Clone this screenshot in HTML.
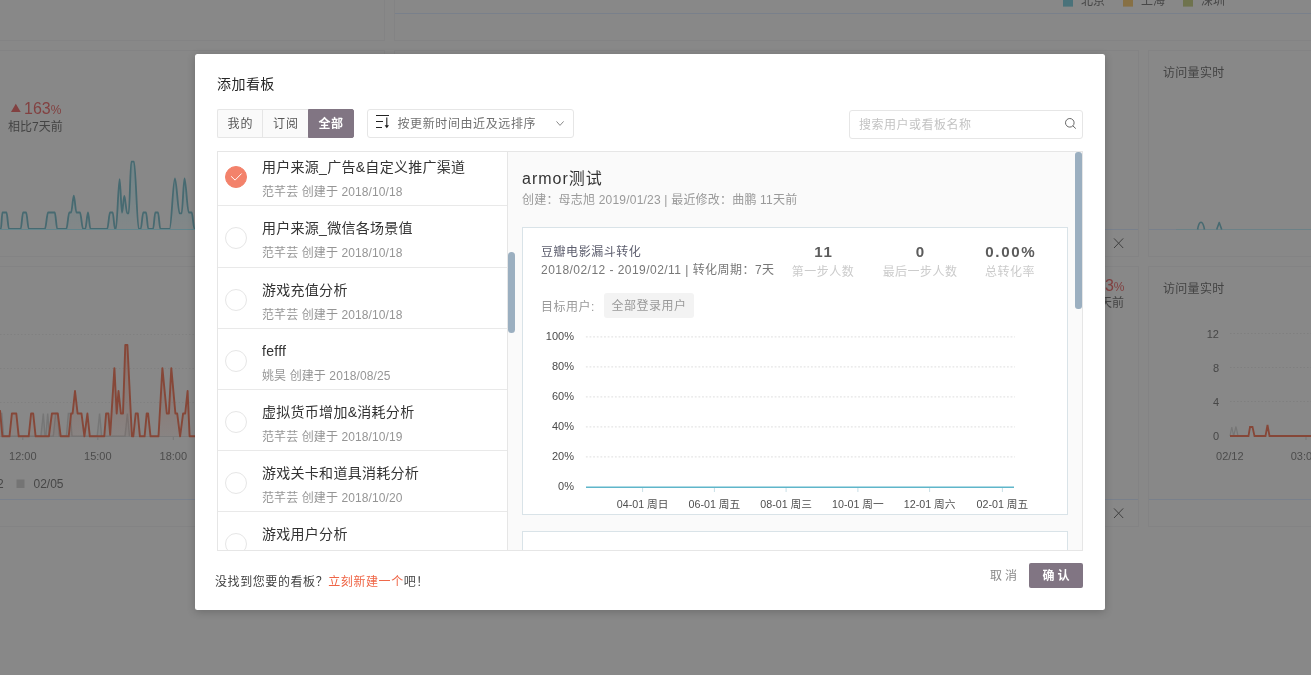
<!DOCTYPE html>
<html lang="zh-CN">
<head>
<meta charset="utf-8">
<title>添加看板</title>
<style>
*{box-sizing:border-box;margin:0;padding:0}
html,body{width:1311px;height:675px;overflow:hidden}
body{position:relative;background:#888888;font-family:"Liberation Sans","Noto Sans CJK SC",sans-serif;font-size:12px;color:#333}
.abs{position:absolute}
.card{position:absolute;background:#888888;border:1px solid #838384}
.hl{position:absolute;height:1px;background:#79808b}
.bgt{position:absolute;color:#4d4d4d;font-size:12px;white-space:nowrap;line-height:14px}
#modal{will-change:transform;position:absolute;left:195px;top:54px;width:910px;height:556px;background:#fff;border-radius:2.5px;box-shadow:0 2px 8px rgba(0,0,0,.2)}
#title{position:absolute;left:22px;top:22px;font-size:14px;line-height:16px;color:#262626;white-space:nowrap;letter-spacing:.45px}
.tabs{position:absolute;left:22px;top:55px;height:29px;display:flex}
.tab{width:46px;height:29px;line-height:28px;text-align:center;font-size:12px;color:#555;border:1px solid #e6e6e6;border-right:none;background:#fafafa;white-space:nowrap;letter-spacing:.8px;padding-left:.8px}
.tab:first-child{border-radius:2px 0 0 2px;width:45px}
.tab.on{background:#817583;color:#fff;font-weight:bold;border:1px solid #817583;border-radius:0 2px 2px 0;padding-left:0;letter-spacing:.6px}
.sel{position:absolute;left:172px;top:55px;width:207px;height:29px;border:1px solid #e6e6e6;border-radius:3px;background:#fff}
.sel span{position:absolute;left:29.5px;top:0;line-height:28px;font-size:12px;color:#707070;white-space:nowrap;letter-spacing:.6px}
.search{position:absolute;left:654px;top:56px;width:234px;height:29px;border:1px solid #e6e6e6;border-radius:3px;background:#fff}
.search span{position:absolute;left:9px;top:0;line-height:28px;font-size:12px;color:#c3c3c3;white-space:nowrap;letter-spacing:.5px}
#list{position:absolute;left:22px;top:97px;width:291px;height:400px;border:1px solid #e6e6e6;border-right:none;overflow:hidden;background:#fff}
.it{position:relative;height:61px;border-bottom:1px solid #e9e9e9}
.it .c{position:absolute;left:7px;top:20.5px;width:22px;height:22px;border-radius:50%;border:1px solid #e6e6e6;background:#fff}
.it .c.on{background:#f3826b;border-color:#f3826b}
.it .c svg{position:absolute;left:-1px;top:-1px}
.it .t{position:absolute;left:44px;top:14px;font-size:14px;line-height:16px;color:#333;white-space:nowrap;letter-spacing:.28px}
.it .s{position:absolute;left:44px;top:40px;font-size:12px;line-height:14px;color:#959595;white-space:nowrap;letter-spacing:.1px}
#panel{position:absolute;left:312px;top:97px;width:576px;height:400px;border:1px solid #e6e6e6;background:#fafafa;overflow:hidden}
#foot{position:absolute;left:20px;top:520px;font-size:12px;line-height:16px;color:#444;white-space:nowrap;letter-spacing:.58px}
#foot b{font-weight:normal;color:#ef6546}
#cancel{position:absolute;left:795px;top:514px;font-size:12px;line-height:16px;color:#888;white-space:nowrap;letter-spacing:3px}
#ok{position:absolute;left:834px;top:509px;width:54px;height:25px;background:#817583;border-radius:2px;color:#fff;font-weight:bold;font-size:12px;line-height:26px;text-align:center;letter-spacing:3px;padding-left:3px}

#ph{position:absolute;left:14px;top:17px;font-size:16px;line-height:20px;color:#333;white-space:nowrap;letter-spacing:1px}
#ps{position:absolute;left:14px;top:41px;font-size:12px;line-height:14px;color:#999;white-space:nowrap;letter-spacing:.2px}
.pc{position:absolute;left:14px;width:546px;border:1px solid #d9e3e8;background:#fff}
.pc .ct{position:absolute;left:18px;top:17px;font-size:12px;line-height:14px;color:#5d5e6e;white-space:nowrap;letter-spacing:.55px}
.pc .cd{position:absolute;left:18px;top:35px;font-size:12px;line-height:14px;color:#777;white-space:nowrap;letter-spacing:.46px}
.st{position:absolute;top:16px;width:100px;text-align:center;white-space:nowrap}
.st b{display:block;font-size:14px;line-height:16px;color:#5c5c5c;letter-spacing:1.5px;padding-left:1.5px;transform:scaleX(1.08)}
.st i{display:block;font-style:normal;font-size:12px;line-height:14px;color:#cbcbcb;margin-top:4.5px;letter-spacing:.45px}
.tu{position:absolute;left:18px;top:72px;font-size:12px;line-height:14px;color:#999;white-space:nowrap;letter-spacing:.5px}
.tg{position:absolute;left:81px;top:65px;width:90px;height:25px;border-radius:3px;background:#f3f3f3;color:#999;font-size:12px;line-height:27px;text-align:center;white-space:nowrap;letter-spacing:.5px}
.sb{position:absolute;width:7px;border-radius:3.5px;background:#9bafc0}
svg text{font-family:"Liberation Sans","Noto Sans CJK SC",sans-serif}
#bg{position:absolute;left:0;top:0;width:1311px;height:675px;will-change:transform}
</style>
</head>
<body>
<!-- background dashboard (dimmed) -->
<div id="bg">
<div class="card" style="left:-2px;top:-5px;width:387px;height:46px"></div>
<div class="card" style="left:394px;top:-5px;width:921px;height:46px"></div>
<div class="hl" style="left:395px;top:13px;width:920px"></div>
<div class="card" style="left:-2px;top:50px;width:387px;height:207px"></div>
<div class="card" style="left:394px;top:50px;width:745px;height:207px"></div>
<div class="card" style="left:1148px;top:50px;width:170px;height:207px"></div>
<div class="card" style="left:-2px;top:266px;width:387px;height:261px"></div>
<div class="card" style="left:394px;top:266px;width:745px;height:261px"></div>
<div class="card" style="left:1148px;top:266px;width:170px;height:261px"></div>
<div class="hl" style="left:0;top:229px;width:384px"></div>
<div class="hl" style="left:395px;top:229px;width:743px"></div>
<div class="hl" style="left:1149px;top:229px;width:170px"></div>
<div class="hl" style="left:0;top:499px;width:384px"></div>
<div class="hl" style="left:395px;top:499px;width:743px"></div>
<div class="hl" style="left:1149px;top:499px;width:170px"></div>
<svg class="abs" style="left:0;top:0" width="1311" height="675" viewBox="0 0 1311 675">
<defs><clipPath id="tc"><rect x="0" y="100" width="210" height="129.3"/></clipPath><linearGradient id="tg" x1="0" y1="160" x2="0" y2="229" gradientUnits="userSpaceOnUse"><stop offset="0" stop-color="#4f7f88" stop-opacity=".4"/><stop offset="1" stop-color="#4f7f88" stop-opacity=".1"/></linearGradient><linearGradient id="og" x1="0" y1="345" x2="0" y2="436" gradientUnits="userSpaceOnUse"><stop offset="0" stop-color="#8f5040" stop-opacity=".4"/><stop offset="1" stop-color="#8f5040" stop-opacity=".08"/></linearGradient></defs>
<rect x="1063" y="-3.4" width="10" height="10" fill="#4a727a"/><rect x="1123" y="-3.4" width="10" height="10" fill="#877044"/><rect x="1183" y="-3.4" width="10" height="10" fill="#6f734e"/>
<text x="1081" y="5.2" font-size="12" fill="#484848">北京</text><text x="1141" y="5.2" font-size="12" fill="#484848">上海</text><text x="1201" y="5.2" font-size="12" fill="#484848">深圳</text>
<path d="M0.0 228.8C0.3 228.8 0.6 228.8 0.9 228.8C1.4 228.8 1.9 212.5 2.4 212.5C3.8 212.5 5.1 212.5 6.5 212.5C7.3 212.5 8.1 228.8 8.9 228.8C12.8 228.8 16.8 228.8 20.7 228.8C21.5 228.8 22.3 212.5 23.1 212.5C24.1 212.5 25.1 212.5 26.1 212.5C27.0 212.5 27.9 228.8 28.7 228.8C34.2 228.8 39.6 228.8 45.0 228.8C46.0 228.8 47.0 212.5 48.0 212.5C50.3 212.5 52.5 212.5 54.8 212.5C55.6 212.5 56.4 228.8 57.2 228.8C60.2 228.8 63.3 228.8 66.4 228.8C67.4 228.8 68.3 212.5 69.3 212.5C69.9 212.5 70.5 212.5 71.1 212.5C72.0 212.5 72.9 195.7 73.8 195.7C74.7 195.7 75.6 212.5 76.4 212.5C77.6 212.5 78.8 212.5 80.0 212.5C81.0 212.5 82.0 228.8 83.0 228.8C83.8 228.8 84.5 228.8 85.3 228.8C86.2 228.8 87.1 212.5 88.0 212.5C88.8 212.5 89.6 228.8 90.4 228.8C95.4 228.8 100.5 228.8 105.5 228.8C106.1 228.8 106.7 228.8 107.3 228.8C108.2 228.8 109.1 212.5 110.0 212.5C110.9 212.5 111.8 212.5 112.7 212.5C113.4 212.5 114.2 228.8 114.9 228.8C115.2 228.8 115.6 228.8 115.9 228.8C117.1 228.8 118.4 179.1 119.6 179.1C120.4 179.1 121.2 212.7 122.0 212.7C122.8 212.7 123.5 196.0 124.3 196.0C125.3 196.0 126.2 213.3 127.2 213.3C127.7 213.3 128.2 213.3 128.7 213.3C129.6 213.3 130.4 161.7 131.3 161.7C132.2 161.7 133.1 161.7 134.0 161.7C135.6 161.7 137.1 228.8 138.7 228.8C139.4 228.8 140.0 228.8 140.7 228.8C141.6 228.8 142.4 212.5 143.3 212.5C144.2 212.5 145.1 212.5 146.0 212.5C146.8 212.5 147.5 228.8 148.3 228.8C149.9 228.8 151.5 228.8 153.1 228.8C153.8 228.8 154.6 212.5 155.3 212.5C156.2 212.5 157.1 212.5 158.0 212.5C158.8 212.5 159.5 228.8 160.3 228.8C163.4 228.8 166.5 228.8 169.6 228.8C171.4 228.8 173.1 178.4 174.9 178.4C176.5 178.4 178.0 213.3 179.6 213.3C180.3 213.3 180.9 213.3 181.6 213.3C182.6 213.3 183.5 178.4 184.5 178.4C185.9 178.4 187.3 212.5 188.7 212.5C189.7 212.5 190.7 212.5 191.7 212.5C192.6 212.5 193.5 228.8 194.4 228.8C199.6 228.8 204.8 228.8 210.0 228.8L210 229L0 229Z" fill="url(#tg)"/>
<path d="M0.0 228.8C0.3 228.8 0.6 228.8 0.9 228.8C1.4 228.8 1.9 212.5 2.4 212.5C3.8 212.5 5.1 212.5 6.5 212.5C7.3 212.5 8.1 228.8 8.9 228.8C12.8 228.8 16.8 228.8 20.7 228.8C21.5 228.8 22.3 212.5 23.1 212.5C24.1 212.5 25.1 212.5 26.1 212.5C27.0 212.5 27.9 228.8 28.7 228.8C34.2 228.8 39.6 228.8 45.0 228.8C46.0 228.8 47.0 212.5 48.0 212.5C50.3 212.5 52.5 212.5 54.8 212.5C55.6 212.5 56.4 228.8 57.2 228.8C60.2 228.8 63.3 228.8 66.4 228.8C67.4 228.8 68.3 212.5 69.3 212.5C69.9 212.5 70.5 212.5 71.1 212.5C72.0 212.5 72.9 195.7 73.8 195.7C74.7 195.7 75.6 212.5 76.4 212.5C77.6 212.5 78.8 212.5 80.0 212.5C81.0 212.5 82.0 228.8 83.0 228.8C83.8 228.8 84.5 228.8 85.3 228.8C86.2 228.8 87.1 212.5 88.0 212.5C88.8 212.5 89.6 228.8 90.4 228.8C95.4 228.8 100.5 228.8 105.5 228.8C106.1 228.8 106.7 228.8 107.3 228.8C108.2 228.8 109.1 212.5 110.0 212.5C110.9 212.5 111.8 212.5 112.7 212.5C113.4 212.5 114.2 228.8 114.9 228.8C115.2 228.8 115.6 228.8 115.9 228.8C117.1 228.8 118.4 179.1 119.6 179.1C120.4 179.1 121.2 212.7 122.0 212.7C122.8 212.7 123.5 196.0 124.3 196.0C125.3 196.0 126.2 213.3 127.2 213.3C127.7 213.3 128.2 213.3 128.7 213.3C129.6 213.3 130.4 161.7 131.3 161.7C132.2 161.7 133.1 161.7 134.0 161.7C135.6 161.7 137.1 228.8 138.7 228.8C139.4 228.8 140.0 228.8 140.7 228.8C141.6 228.8 142.4 212.5 143.3 212.5C144.2 212.5 145.1 212.5 146.0 212.5C146.8 212.5 147.5 228.8 148.3 228.8C149.9 228.8 151.5 228.8 153.1 228.8C153.8 228.8 154.6 212.5 155.3 212.5C156.2 212.5 157.1 212.5 158.0 212.5C158.8 212.5 159.5 228.8 160.3 228.8C163.4 228.8 166.5 228.8 169.6 228.8C171.4 228.8 173.1 178.4 174.9 178.4C176.5 178.4 178.0 213.3 179.6 213.3C180.3 213.3 180.9 213.3 181.6 213.3C182.6 213.3 183.5 178.4 184.5 178.4C185.9 178.4 187.3 212.5 188.7 212.5C189.7 212.5 190.7 212.5 191.7 212.5C192.6 212.5 193.5 228.8 194.4 228.8C199.6 228.8 204.8 228.8 210.0 228.8" fill="none" stroke="#476a71" stroke-width="1.8" stroke-linejoin="round" clip-path="url(#tc)"/><line x1="0" y1="229.5" x2="200" y2="229.5" stroke="#63848b" stroke-width="1"/>
<polygon points="11,112 20.7,112 15.8,103.8" fill="#824141"/>
<text x="24" y="114" font-size="16" fill="#824141">163<tspan font-size="12">%</tspan></text>
<text x="8" y="131" font-size="12" fill="#444">相比7天前</text>
<g stroke="#808080" stroke-width="1" stroke-dasharray="1.5 2"><line x1="0" y1="334.5" x2="200" y2="334.5"/><line x1="0" y1="368.5" x2="200" y2="368.5"/><line x1="0" y1="402.5" x2="200" y2="402.5"/></g>
<line x1="0" y1="436.5" x2="200" y2="436.5" stroke="#7c7c7c" stroke-width="1"/>
<polygon points="0.0,413.5 1.8,413.5 3.6,436.3 40.9,436.3 43.3,413.5 45.0,436.3 45.9,436.3 47.7,413.5 49.5,436.3 53.3,436.3 55.7,413.5 57.5,413.5 59.3,436.3 66.4,436.3 68.4,413.5 70.2,413.5 72.0,436.3 97.2,436.3 99.6,413.5 101.6,436.3 125.0,436.3 127.4,413.5 129.5,436.3 129.5,436.3 0.0,436.3" fill="#777" fill-opacity=".2"/>
<polyline points="0.0,413.5 1.8,413.5 3.6,436.3 40.9,436.3 43.3,413.5 45.0,436.3 45.9,436.3 47.7,413.5 49.5,436.3 53.3,436.3 55.7,413.5 57.5,413.5 59.3,436.3 66.4,436.3 68.4,413.5 70.2,413.5 72.0,436.3 97.2,436.3 99.6,413.5 101.6,436.3 125.0,436.3 127.4,413.5 129.5,436.3" fill="none" stroke="#767676" stroke-width="1.4"/>
<polygon points="0.0,410.2 2.4,436.3 9.5,436.3 11.9,413.5 16.3,413.5 18.7,436.3 28.7,436.3 31.1,413.5 33.2,413.5 35.6,436.3 48.9,436.3 51.9,413.5 57.8,413.5 60.7,436.3 68.7,436.3 71.1,413.5 72.6,413.5 75.0,391.0 77.6,413.5 81.5,413.5 84.4,436.3 87.4,413.5 89.8,436.3 104.3,436.3 106.1,413.5 108.4,413.5 110.2,434.8 114.4,368.1 116.7,413.5 118.5,391.0 120.9,413.5 123.0,413.5 125.3,345.0 127.4,345.0 131.9,436.3 133.3,436.3 135.7,413.5 137.8,413.5 139.9,436.3 144.6,436.3 146.7,413.5 148.1,413.5 150.5,436.3 158.5,436.3 162.4,368.1 166.8,413.5 168.9,413.5 171.3,368.1 175.4,413.5 177.2,413.5 180.1,436.3 183.1,413.5 185.2,413.5 187.6,391.0 189.6,436.3 207.4,436.3 207.4,436.3 0.0,436.3" fill="url(#og)"/>
<polyline points="0.0,410.2 2.4,436.3 9.5,436.3 11.9,413.5 16.3,413.5 18.7,436.3 28.7,436.3 31.1,413.5 33.2,413.5 35.6,436.3 48.9,436.3 51.9,413.5 57.8,413.5 60.7,436.3 68.7,436.3 71.1,413.5 72.6,413.5 75.0,391.0 77.6,413.5 81.5,413.5 84.4,436.3 87.4,413.5 89.8,436.3 104.3,436.3 106.1,413.5 108.4,413.5 110.2,434.8 114.4,368.1 116.7,413.5 118.5,391.0 120.9,413.5 123.0,413.5 125.3,345.0 127.4,345.0 131.9,436.3 133.3,436.3 135.7,413.5 137.8,413.5 139.9,436.3 144.6,436.3 146.7,413.5 148.1,413.5 150.5,436.3 158.5,436.3 162.4,368.1 166.8,413.5 168.9,413.5 171.3,368.1 175.4,413.5 177.2,413.5 180.1,436.3 183.1,413.5 185.2,413.5 187.6,391.0 189.6,436.3 207.4,436.3" fill="none" stroke="#864738" stroke-width="1.9" stroke-linejoin="round"/>
<g stroke="#777" stroke-width="1"><line x1="22.8" y1="437" x2="22.8" y2="440"/><line x1="97.8" y1="437" x2="97.8" y2="440"/><line x1="173.3" y1="437" x2="173.3" y2="440"/></g>
<g font-size="11" fill="#4c4c4c" text-anchor="middle"><text x="22.8" y="459.7">12:00</text><text x="97.8" y="459.7">15:00</text><text x="173.3" y="459.7">18:00</text></g>
<text x="-3" y="487.5" font-size="12" fill="#474747">2</text><rect x="16.5" y="479.5" width="8" height="8.5" fill="#747474"/><text x="33.5" y="487.5" font-size="12" fill="#474747">02/05</text>
<g stroke="#404040" stroke-width="1"><path d="M1114 238.4L1123.2 248M1123.2 238.4L1114 248"/><path d="M1114 508.4L1123.2 518M1123.2 508.4L1114 518"/></g>
<text x="1124.5" y="291" font-size="16" fill="#824141" text-anchor="end">163<tspan font-size="12">%</tspan></text>
<text x="1124" y="307" font-size="12" fill="#444" text-anchor="end">相比7天前</text>
<text x="1163" y="77" font-size="12" fill="#434343" letter-spacing=".3">访问量实时</text>
<text x="1163" y="293" font-size="12" fill="#434343" letter-spacing=".3">访问量实时</text>
<line x1="1176" y1="229.5" x2="1311" y2="229.5" stroke="#6c8187" stroke-width="1"/><path d="M1197.6 229.5C1198.4 224.5 1199.4 222.2 1201 222.2C1202.6 222.2 1203.6 224.5 1204.5 229.5M1216.7 229.5L1219.2 222.6L1221.7 229.5" fill="none" stroke="#476a71" stroke-width="1.6" stroke-linejoin="round"/>
<g stroke="#7f7f7f" stroke-width="1" stroke-dasharray="1.5 2"><line x1="1230" y1="333.5" x2="1311" y2="333.5"/><line x1="1230" y1="367.5" x2="1311" y2="367.5"/><line x1="1230" y1="401.5" x2="1311" y2="401.5"/></g>
<g font-size="11" fill="#474747" text-anchor="end"><text x="1219" y="338">12</text><text x="1219" y="372">8</text><text x="1219" y="406">4</text><text x="1219" y="440">0</text></g>
<polyline points="1230,436 1231.8,427 1233.6,436 1236,426.5 1238,436" fill="none" stroke="#767676" stroke-width="1.2"/>
<polyline points="1230,436 1248.5,436 1250,427 1252.5,427 1254.5,436 1265.5,436 1267.5,425 1269.5,436 1311,436" fill="none" stroke="#864738" stroke-width="1.8"/>
<line x1="1306" y1="437" x2="1306" y2="440" stroke="#777"/>
<g font-size="11" fill="#4c4c4c"><text x="1229.8" y="460.3" text-anchor="middle">02/12</text><text x="1290.7" y="460.3">03:00</text></g>
</svg>
</div>

<div id="modal">
<div id="title">添加看板</div>
<div class="tabs"><div class="tab">我的</div><div class="tab">订阅</div><div class="tab on">全部</div></div>
<div class="sel"><svg class="abs" style="left:0;top:0" width="205" height="27" viewBox="0 0 205 27"><g stroke="#222" stroke-width="1.1" fill="none"><path d="M8 5.5H21M8 11.5H15M8 17.5H14M18.8 7.5V17"/></g><path d="M16.6 15.2H21L18.8 18.2Z" fill="#222"/><path d="M188.5 11.4L192 15.4L195.6 11.4" stroke="#8a8a8a" stroke-width="1" fill="none"/></svg><span>按更新时间由近及远排序</span></div>
<div class="search"><span>搜索用户或看板名称</span><svg class="abs" style="left:0;top:0" width="232" height="27" viewBox="0 0 232 27"><g stroke="#666" stroke-width="1" fill="none"><circle cx="219.8" cy="11.8" r="4.3"/><path d="M222.9 14.9L225.8 17.6"/></g></svg></div>
<div id="list">
<div class="it" style="margin-top:-7px"><div class="c on"><svg width="22" height="22" viewBox="0 0 22 22"><path d="M6.1 10.3L10.1 14.1L16.6 7.5" stroke="#fff" stroke-width=".95" fill="none"/></svg></div><div class="t">用户来源_广告&amp;自定义推广渠道</div><div class="s">范芊芸 创建于 2018/10/18</div></div>
<div class="it" style="height:62px"><div class="c"></div><div class="t">用户来源_微信各场景值</div><div class="s">范芊芸 创建于 2018/10/18</div></div>
<div class="it"><div class="c"></div><div class="t">游戏充值分析</div><div class="s">范芊芸 创建于 2018/10/18</div></div>
<div class="it"><div class="c"></div><div class="t">fefff</div><div class="s">姚昊 创建于 2018/08/25</div></div>
<div class="it"><div class="c"></div><div class="t">虚拟货币增加&amp;消耗分析</div><div class="s">范芊芸 创建于 2018/10/19</div></div>
<div class="it"><div class="c"></div><div class="t">游戏关卡和道具消耗分析</div><div class="s">范芊芸 创建于 2018/10/20</div></div>
<div class="it"><div class="c"></div><div class="t">游戏用户分析</div><div class="s">范芊芸 创建于 2018/10/20</div></div>
</div>
<div id="panel">
<div id="ph">armor测试</div>
<div id="ps">创建：母志旭 2019/01/23 | 最近修改：曲鹏 11天前</div>
<div class="pc" style="top:75px;height:288px">
<div class="ct">豆瓣电影漏斗转化</div>
<div class="cd">2018/02/12 - 2019/02/11 | 转化周期：7天</div>
<div class="st" style="left:250px"><b>11</b><i>第一步人数</i></div>
<div class="st" style="left:347px"><b>0</b><i>最后一步人数</i></div>
<div class="st" style="left:437px"><b>0.00%</b><i>总转化率</i></div>
<div class="tu">目标用户:</div><div class="tg">全部登录用户</div>
<svg class="abs" style="left:0;top:0" width="544" height="286" viewBox="0 0 544 286"><line x1="62.9" y1="108.85" x2="492" y2="108.85" stroke="#e5e5e5" stroke-width="1.4" stroke-dasharray="1.8 1.83"/><text x="51.0" y="112.3" text-anchor="end" font-size="11" fill="#4a4a4a">100%</text><line x1="62.9" y1="138.85" x2="492" y2="138.85" stroke="#e5e5e5" stroke-width="1.4" stroke-dasharray="1.8 1.83"/><text x="51.0" y="142.3" text-anchor="end" font-size="11" fill="#4a4a4a">80%</text><line x1="62.9" y1="168.85" x2="492" y2="168.85" stroke="#e5e5e5" stroke-width="1.4" stroke-dasharray="1.8 1.83"/><text x="51.0" y="172.3" text-anchor="end" font-size="11" fill="#4a4a4a">60%</text><line x1="62.9" y1="198.85" x2="492" y2="198.85" stroke="#e5e5e5" stroke-width="1.4" stroke-dasharray="1.8 1.83"/><text x="51.0" y="202.3" text-anchor="end" font-size="11" fill="#4a4a4a">40%</text><line x1="62.9" y1="228.85" x2="492" y2="228.85" stroke="#e5e5e5" stroke-width="1.4" stroke-dasharray="1.8 1.83"/><text x="51.0" y="232.3" text-anchor="end" font-size="11" fill="#4a4a4a">20%</text><text x="51.0" y="262.3" text-anchor="end" font-size="11" fill="#4a4a4a">0%</text><line x1="63" y1="259.3" x2="491" y2="259.3" stroke="#5fb6ca" stroke-width="1.6"/><line x1="119.6" y1="260" x2="119.6" y2="264" stroke="#c9dfe6" stroke-width="1"/><text x="119.6" y="280.2" text-anchor="middle" font-size="10.7" fill="#4f4f4f">04-01 周日</text><line x1="191.4" y1="260" x2="191.4" y2="264" stroke="#c9dfe6" stroke-width="1"/><text x="191.4" y="280.2" text-anchor="middle" font-size="10.7" fill="#4f4f4f">06-01 周五</text><line x1="263.1" y1="260" x2="263.1" y2="264" stroke="#c9dfe6" stroke-width="1"/><text x="263.1" y="280.2" text-anchor="middle" font-size="10.7" fill="#4f4f4f">08-01 周三</text><line x1="334.9" y1="260" x2="334.9" y2="264" stroke="#c9dfe6" stroke-width="1"/><text x="334.9" y="280.2" text-anchor="middle" font-size="10.7" fill="#4f4f4f">10-01 周一</text><line x1="406.6" y1="260" x2="406.6" y2="264" stroke="#c9dfe6" stroke-width="1"/><text x="406.6" y="280.2" text-anchor="middle" font-size="10.7" fill="#4f4f4f">12-01 周六</text><line x1="479.4" y1="260" x2="479.4" y2="264" stroke="#c9dfe6" stroke-width="1"/><text x="479.4" y="280.2" text-anchor="middle" font-size="10.7" fill="#4f4f4f">02-01 周五</text></svg>
</div>
<div class="pc" style="top:379px;height:60px"></div>
<div class="sb" style="left:566.5px;top:0;height:157px;border-radius:3px"></div>
</div>
<div class="sb" style="left:313px;top:198px;height:81px"></div>
<div id="foot">没找到您要的看板？<b>立刻新建一个</b>吧！</div>
<div id="cancel">取消</div>
<div id="ok">确认</div>
</div>
</body>
</html>
